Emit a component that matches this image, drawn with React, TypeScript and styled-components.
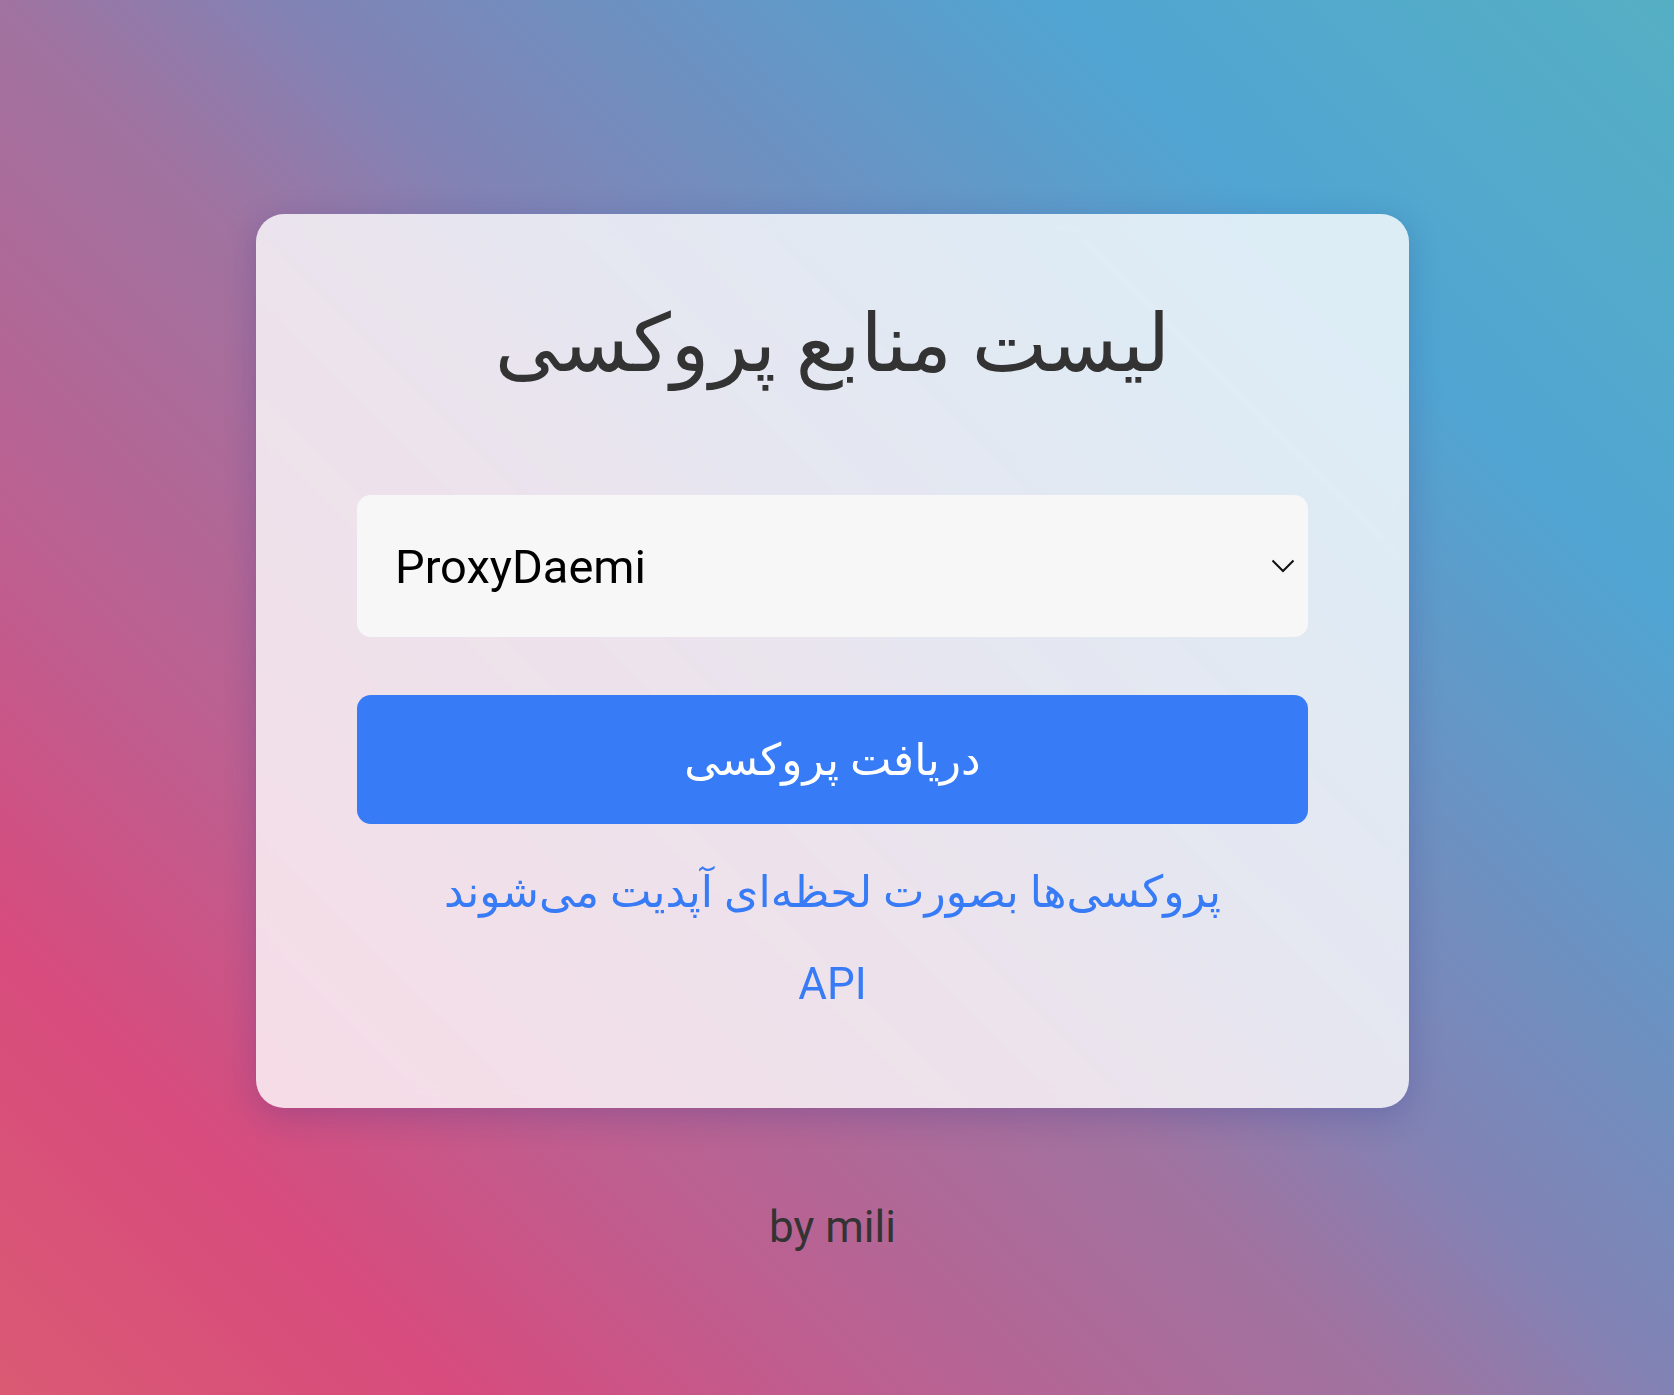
import React from "react";
import styled, { createGlobalStyle } from "styled-components";

const GlobalStyle = createGlobalStyle`
  html, body {
    margin: 0;
    padding: 0;
  }
  body {
    font-family: Roboto, "DejaVu Sans", sans-serif;
    background: linear-gradient(
      45deg,
      #da5a73 0%,
      #d74b7d 15%,
      #bf5e8f 27%,
      #a073a0 45.5%,
      #8282b4 54.5%,
      #50a5d2 80%,
      #55afc3 100%
    );
    min-height: 100vh;
  }
`;

const Page = styled.div`
  min-height: 100vh;
  box-sizing: border-box;
  display: flex;
  flex-direction: column;
  align-items: center;
  padding: 214px 9px 0 0;
`;

const Card = styled.main`
  width: 1153px;
  box-sizing: border-box;
  padding: 87px 101px 91px;
  background: rgba(255, 255, 255, 0.8);
  backdrop-filter: blur(10px);
  border-radius: 28px;
  box-shadow: 0 8px 32px rgba(31, 38, 135, 0.22);
  display: flex;
  flex-direction: column;
  align-items: stretch;
`;

const Title = styled.h1`
  margin: 0;
  font-family: Roboto, "DejaVu Sans", sans-serif;
  font-size: 80px;
  line-height: 86px;
  font-weight: 400;
  color: #333333;
  text-align: center;
  direction: rtl;
`;

const SelectWrap = styled.div`
  position: relative;
  margin-top: 108px;
`;

const Select = styled.select`
  appearance: none;
  -webkit-appearance: none;
  display: block;
  width: 100%;
  height: 142px;
  box-sizing: border-box;
  padding: 0 60px 0 38px;
  border: none;
  border-radius: 14px;
  background: #f7f7f7;
  font-family: Roboto, "DejaVu Sans", sans-serif;
  font-size: 47px;
  color: #000000;
  outline: none;
`;

const Chevron = styled.svg`
  position: absolute;
  right: 13px;
  top: 50%;
  transform: translateY(-50%);
  pointer-events: none;
`;

const PrimaryButton = styled.button`
  margin-top: 58px;
  height: 129px;
  border: none;
  border-radius: 14px;
  background: #377bf6;
  color: #ffffff;
  font-family: Roboto, "DejaVu Sans", sans-serif;
  font-size: 44px;
  direction: rtl;
  cursor: pointer;
`;

const LinkText = styled.a<{ $size: number; $gap: number }>`
  display: block;
  margin-top: ${(p) => p.$gap}px;
  font-family: Roboto, "DejaVu Sans", sans-serif;
  font-size: ${(p) => p.$size}px;
  line-height: 1.5;
  color: #377bf6;
  text-align: center;
  text-decoration: none;
  direction: rtl;
`;

const Footer = styled.footer`
  margin-top: 86px;
  font-family: Roboto, "DejaVu Sans", sans-serif;
  font-size: 44px;
  line-height: 1.5;
  color: #333333;
  text-align: center;
`;

export default function App() {
  return (
    <>
      <GlobalStyle />
      <Page>
        <Card>
          <Title>لیست منابع پروکسی</Title>
          <SelectWrap>
            <Select defaultValue="ProxyDaemi">
              <option value="ProxyDaemi">ProxyDaemi</option>
            </Select>
            <Chevron width="24" height="14" viewBox="0 0 24 14" fill="none">
              <path d="M1.5 1.5 L12 12 L22.5 1.5" stroke="#111" strokeWidth="2" />
            </Chevron>
          </SelectWrap>
          <PrimaryButton>دریافت پروکسی</PrimaryButton>
          <LinkText href="#" $size={44} $gap={35}>
            {"پروکسی\u200cها بصورت لحظه\u200cای آپدیت می\u200cشوند"}
          </LinkText>
          <LinkText href="#" $size={44} $gap={26}>
            API
          </LinkText>
        </Card>
        <Footer>by mili</Footer>
      </Page>
    </>
  );
}
